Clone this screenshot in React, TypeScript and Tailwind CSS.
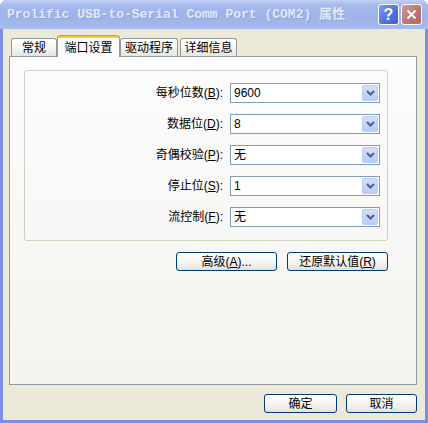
import type { ReactNode } from "react";

const FONT = "font-['Liberation_Sans','Noto_Sans_CJK_SC',sans-serif]";

const rows = [
  { label: "每秒位数", key: "B", value: "9600" },
  { label: "数据位", key: "D", value: "8" },
  { label: "奇偶校验", key: "P", value: "无" },
  { label: "停止位", key: "S", value: "1" },
  { label: "流控制", key: "F", value: "无" },
];

function Combo({ value }: { value: string }) {
  return (
    <div className="w-[150px] h-[20px] border border-[#7F9DB9] bg-white flex items-center p-px">
      <span className="flex-1 pl-[2px] text-[12px] leading-none text-black">{value}</span>
      <div className="w-[16px] h-[16px] rounded-[2px] border border-[#BACCF8] bg-[linear-gradient(180deg,#D2DFFD_0%,#B9CCF8_100%)] flex items-center justify-center">
        <svg width="9" height="6" viewBox="0 0 9 6">
          <path d="M1 1 L4.5 4.5 L8 1" fill="none" stroke="#4D6185" strokeWidth="2" />
        </svg>
      </div>
    </div>
  );
}

function XpButton({ children, className }: { children: ReactNode; className: string }) {
  return (
    <button
      className={`${className} rounded-[3px] border border-[#003C74] bg-[linear-gradient(180deg,#FFFFFF_0%,#F4F3EE_60%,#E3E1D9_100%)] text-[12px] leading-none text-black flex items-center justify-center`}
    >
      {children}
    </button>
  );
}

function Tab({ label, active, w }: { label: string; active?: boolean; w: string }) {
  if (active) {
    return (
      <div className={`${w} h-[22px] -mb-px relative z-10 flex flex-col rounded-t-[3px] border-x border-[#919B9C] bg-[#FCFCFE]`}>
        <div className="h-[3px] rounded-t-[3px] bg-[#FFC83C] border-t border-[#E68B2C]" />
        <div className="flex-1 flex items-center justify-center text-[12px] text-black">{label}</div>
      </div>
    );
  }
  return (
    <div
      className={`${w} h-[18px] flex items-center justify-center rounded-t-[3px] border border-b-0 border-[#919B9C] bg-[linear-gradient(180deg,#FFFFFF_0%,#F3F3EF_60%,#E6E5DE_100%)] text-[12px] text-black`}
    >
      {label}
    </div>
  );
}

export default function App() {
  return (
    <div className={`w-[428px] h-[423px] flex flex-col bg-[#7D8EE2] rounded-t-[7px] overflow-hidden ${FONT}`}>
      {/* TITLE BAR */}
      <div className="h-[29px] shrink-0 flex items-center pl-[7px] pr-[6px] bg-[linear-gradient(180deg,#C2D1F5_0%,#A4B9EC_18%,#9DB3EA_60%,#A6BBEE_100%)]">
        <span className="flex-1 pt-[1px] font-['Liberation_Mono','Noto_Sans_CJK_SC',monospace] font-bold text-[13px] text-[#E2EAF9] [text-shadow:1px_1px_0_#8EA3D9]">
          Prolific USB-to-Serial Comm Port (COM2) 属性
        </span>
        <div className="flex gap-[2px]">
          <div className="w-[21px] h-[21px] rounded-[3px] border border-white bg-[linear-gradient(135deg,#7D9BF0_0%,#4E70DA_60%,#3D5FD0_100%)] flex items-center justify-center text-white font-bold text-[16px] leading-none font-['Liberation_Sans',sans-serif]">
            ?
          </div>
          <div className="w-[21px] h-[21px] rounded-[3px] border border-white bg-[linear-gradient(135deg,#D39A9C_0%,#B97275_60%,#AE6A6E_100%)] flex items-center justify-center">
            <svg width="11" height="11" viewBox="0 0 11 11">
              <path d="M1.5 1.5 L9.5 9.5 M9.5 1.5 L1.5 9.5" stroke="white" strokeWidth="2" />
            </svg>
          </div>
        </div>
      </div>

      {/* BODY */}
      <div className="flex-1 mx-[3px] mb-[3px] bg-[#ECE9D8] flex flex-col pt-[5px] pl-[6px] pr-[8px]">
        {/* TABS */}
        <div className="flex items-end h-[22px] pl-[2px]">
          <Tab label="常规" w="w-[46px]" />
          <Tab label="端口设置" active w="w-[63px]" />
          <Tab label="驱动程序" w="w-[58px]" />
          <div className="w-[2px]" />
          <Tab label="详细信息" w="w-[57px]" />
        </div>

        {/* TAB PANEL */}
        <div className="h-[329px] border border-[#919B9C] bg-[linear-gradient(180deg,#FCFCFE_0%,#F4F3EE_100%)] pt-[13px] pl-[14px] pr-[28px]">
          <div className="h-[171px] rounded-[3px] border border-[#D0D0BF] pt-[12px] pr-[7px] flex flex-col gap-[11px]">
            {rows.map((row) => (
              <div key={row.key} className="flex items-center justify-end gap-[7px]">
                <span className="text-[12px] text-black">
                  {row.label}(<u>{row.key}</u>):
                </span>
                <Combo value={row.value} />
              </div>
            ))}
          </div>

          <div className="flex justify-end gap-[10px] mt-[11px]">
            <XpButton className="w-[101px] h-[19px]">
              高级(<u>A</u>)...
            </XpButton>
            <XpButton className="w-[101px] h-[19px]">
              还原默认值(<u>R</u>)
            </XpButton>
          </div>
        </div>

        {/* FOOTER BUTTONS */}
        <div className="flex justify-end gap-[9px] mt-[9px] pr-0">
          <XpButton className="w-[73px] h-[19px]">确定</XpButton>
          <XpButton className="w-[71px] h-[19px]">取消</XpButton>
        </div>
      </div>
    </div>
  );
}
